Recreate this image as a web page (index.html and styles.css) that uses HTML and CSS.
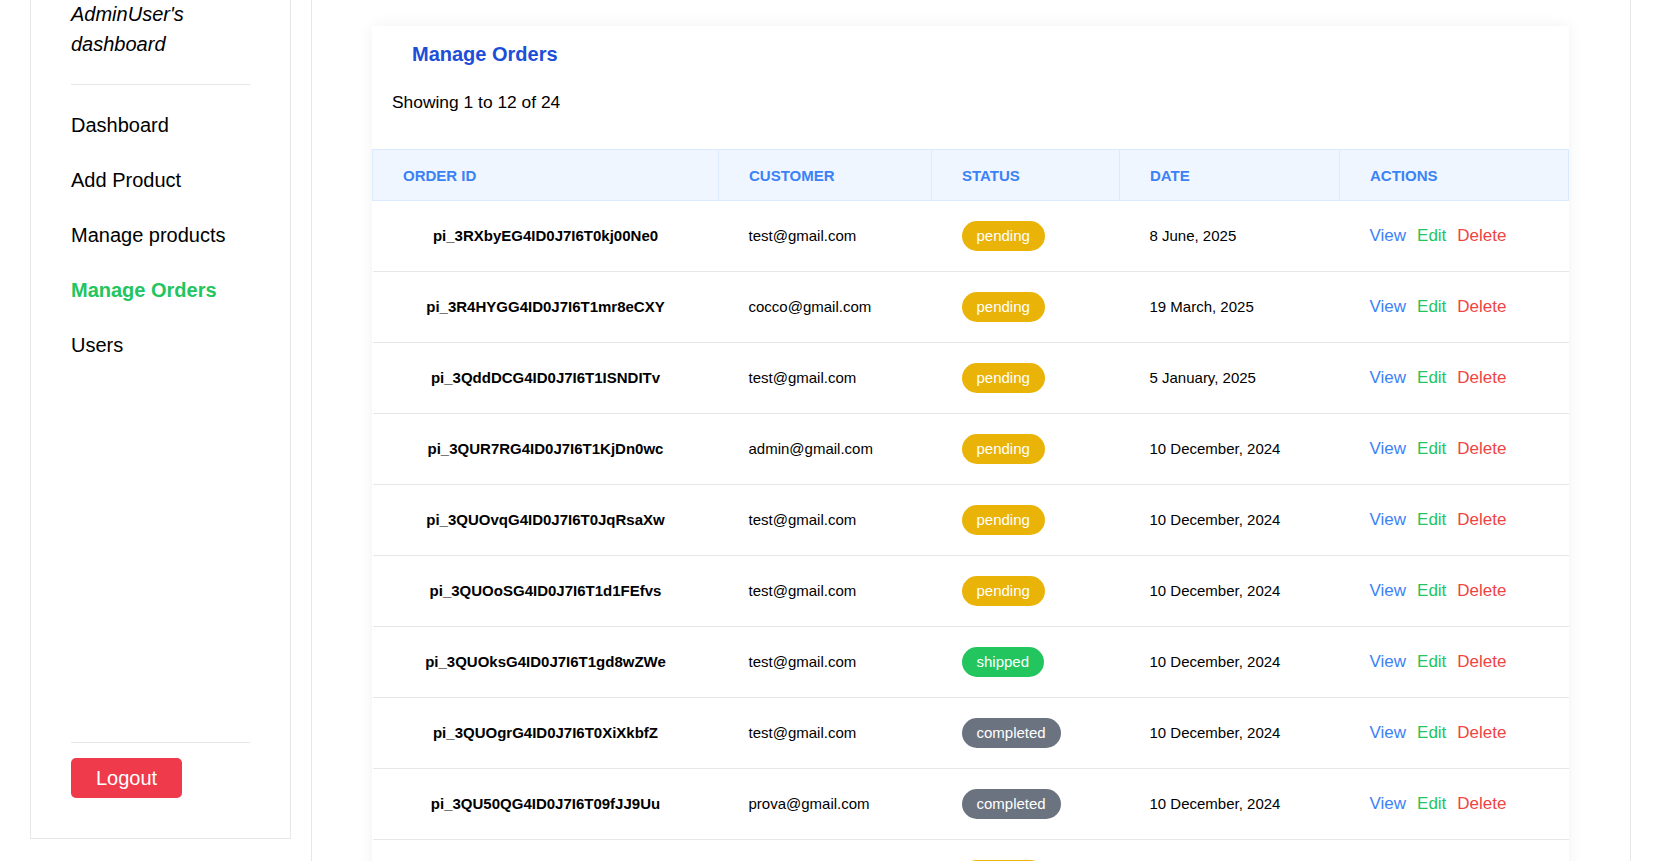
FILE: index.html
```html
<!DOCTYPE html>
<html lang="en">
<head>
<meta charset="utf-8">
<title>Manage Orders</title>
<link rel="stylesheet" href="styles.css">
</head>
<body>
<div class="layout">
  <div class="side-col">
    <aside class="sidebar">
      <h2 class="side-title">AdminUser's dashboard</h2>
      <div class="side-rule"></div>
      <nav class="side-nav">
        <a class="side-link" href="#">Dashboard</a>
        <a class="side-link" href="#">Add Product</a>
        <a class="side-link" href="#">Manage products</a>
        <a class="side-link active" href="#">Manage Orders</a>
        <a class="side-link" href="#">Users</a>
      </nav>
      <div class="side-foot">
        <button class="logout" type="button">Logout</button>
      </div>
    </aside>
  </div>
  <main class="main">
    <section class="card">
      <h1 class="card-title">Manage Orders</h1>
      <p class="card-count">Showing 1 to 12 of 24</p>
      <table class="orders">
        <colgroup>
          <col class="c-id"><col class="c-cust"><col class="c-status"><col class="c-date"><col class="c-act">
        </colgroup>
        <thead>
          <tr><th>Order ID</th><th>Customer</th><th>Status</th><th>Date</th><th>Actions</th></tr>
        </thead>
        <tbody>
          <tr><td class="oid">pi_3RXbyEG4ID0J7I6T0kj00Ne0</td><td>test@gmail.com</td><td><span class="badge pending">pending</span></td><td>8 June, 2025</td><td class="acts"><a class="view" href="#">View</a><a class="edit" href="#">Edit</a><a class="del" href="#">Delete</a></td></tr>
          <tr><td class="oid">pi_3R4HYGG4ID0J7I6T1mr8eCXY</td><td>cocco@gmail.com</td><td><span class="badge pending">pending</span></td><td>19 March, 2025</td><td class="acts"><a class="view" href="#">View</a><a class="edit" href="#">Edit</a><a class="del" href="#">Delete</a></td></tr>
          <tr><td class="oid">pi_3QddDCG4ID0J7I6T1ISNDITv</td><td>test@gmail.com</td><td><span class="badge pending">pending</span></td><td>5 January, 2025</td><td class="acts"><a class="view" href="#">View</a><a class="edit" href="#">Edit</a><a class="del" href="#">Delete</a></td></tr>
          <tr><td class="oid">pi_3QUR7RG4ID0J7I6T1KjDn0wc</td><td>admin@gmail.com</td><td><span class="badge pending">pending</span></td><td>10 December, 2024</td><td class="acts"><a class="view" href="#">View</a><a class="edit" href="#">Edit</a><a class="del" href="#">Delete</a></td></tr>
          <tr><td class="oid">pi_3QUOvqG4ID0J7I6T0JqRsaXw</td><td>test@gmail.com</td><td><span class="badge pending">pending</span></td><td>10 December, 2024</td><td class="acts"><a class="view" href="#">View</a><a class="edit" href="#">Edit</a><a class="del" href="#">Delete</a></td></tr>
          <tr><td class="oid">pi_3QUOoSG4ID0J7I6T1d1FEfvs</td><td>test@gmail.com</td><td><span class="badge pending">pending</span></td><td>10 December, 2024</td><td class="acts"><a class="view" href="#">View</a><a class="edit" href="#">Edit</a><a class="del" href="#">Delete</a></td></tr>
          <tr><td class="oid">pi_3QUOksG4ID0J7I6T1gd8wZWe</td><td>test@gmail.com</td><td><span class="badge shipped">shipped</span></td><td>10 December, 2024</td><td class="acts"><a class="view" href="#">View</a><a class="edit" href="#">Edit</a><a class="del" href="#">Delete</a></td></tr>
          <tr><td class="oid">pi_3QUOgrG4ID0J7I6T0XiXkbfZ</td><td>test@gmail.com</td><td><span class="badge completed">completed</span></td><td>10 December, 2024</td><td class="acts"><a class="view" href="#">View</a><a class="edit" href="#">Edit</a><a class="del" href="#">Delete</a></td></tr>
          <tr><td class="oid">pi_3QU50QG4ID0J7I6T09fJJ9Uu</td><td>prova@gmail.com</td><td><span class="badge completed">completed</span></td><td>10 December, 2024</td><td class="acts"><a class="view" href="#">View</a><a class="edit" href="#">Edit</a><a class="del" href="#">Delete</a></td></tr>
          <tr><td class="oid">pi_3QU4zPG4ID0J7I6T1aB2cD3e</td><td>test@gmail.com</td><td><span class="badge pending">pending</span></td><td>10 December, 2024</td><td class="acts"><a class="view" href="#">View</a><a class="edit" href="#">Edit</a><a class="del" href="#">Delete</a></td></tr>
          <tr><td class="oid">pi_3QU4xKG4ID0J7I6T0mN5pQ7r</td><td>test@gmail.com</td><td><span class="badge pending">pending</span></td><td>9 December, 2024</td><td class="acts"><a class="view" href="#">View</a><a class="edit" href="#">Edit</a><a class="del" href="#">Delete</a></td></tr>
          <tr><td class="oid">pi_3QU4uHG4ID0J7I6T1sT8vW9y</td><td>test@gmail.com</td><td><span class="badge completed">completed</span></td><td>9 December, 2024</td><td class="acts"><a class="view" href="#">View</a><a class="edit" href="#">Edit</a><a class="del" href="#">Delete</a></td></tr>
        </tbody>
      </table>
    </section>
  </main>
</div>
</body>
</html>
```
FILE: styles.css
```css
body {
  margin: 0;
  font-family: "Liberation Sans", Arial, sans-serif;
  color: #000;
  background: #fff;
}

.layout {
  display: flex;
  align-items: stretch;
  margin-top: -42px;
}

/* sidebar */
.side-col {
  flex: 0 0 312px;
  box-sizing: border-box;
  padding: 0 20px 0 30px;
  border-right: 1px solid #e5e7eb;
}

.sidebar {
  height: 881px;
  box-sizing: border-box;
  border: 1px solid #e5e7eb;
  padding: 40px;
  display: flex;
  flex-direction: column;
}

.side-title {
  margin: 0;
  font-size: 20px;
  line-height: 30px;
  font-style: italic;
  font-weight: normal;
}

.side-rule {
  height: 1px;
  background: #e5e7eb;
  margin-top: 25px;
}

.side-nav {
  display: flex;
  flex-direction: column;
  gap: 25px;
  margin-top: 25px;
}

.side-link {
  font-size: 20px;
  line-height: 30px;
  color: #000;
  text-decoration: none;
}

.side-link.active {
  color: #22c55e;
  font-weight: bold;
}

.side-foot {
  margin-top: auto;
  border-top: 1px solid #e5e7eb;
  padding-top: 15px;
}

.logout {
  display: inline-block;
  background: #ee3a4b;
  color: #fff;
  font-family: "Liberation Sans", Arial, sans-serif;
  font-size: 20px;
  line-height: 24px;
  padding: 8px 25px;
  border: 0;
  border-radius: 5px;
}

/* main */
.main {
  flex: 0 0 1318px;
  box-sizing: border-box;
  padding: 68px 61px 40px 60px;
  border-right: 1px solid #e5e7eb;
}

.card {
  background: #fff;
  box-shadow: 0 0 15px rgba(0, 0, 0, 0.06);
  padding: 14px 0 20px;
}

.card-title {
  margin: 0;
  padding: 0 40px;
  font-size: 20px;
  line-height: 28px;
  font-weight: bold;
  color: #1d4ed8;
}

.card-count {
  margin: 21px 20px 0;
  font-size: 17.4px;
  line-height: 26px;
}

.orders {
  margin-top: 34px;
  width: 100%;
  table-layout: fixed;
  border-collapse: collapse;
}

.c-id { width: 346px; }
.c-cust { width: 213px; }
.c-status { width: 188px; }
.c-date { width: 220px; }
.c-act { width: 229px; }

.orders th {
  background: #eff6ff;
  border: 1px solid #dbeafe;
  padding: 17px 30px 16px;
  font-size: 15px;
  line-height: 17px;
  font-weight: bold;
  text-transform: uppercase;
  text-align: left;
  color: #3b82f6;
}

.orders td {
  padding: 20px 30px;
  font-size: 15px;
  line-height: 30px;
  border-bottom: 1px solid #e5e7eb;
  white-space: nowrap;
}

.orders td.oid {
  text-align: center;
  font-weight: bold;
  padding-left: 0;
  padding-right: 0;
}

.badge {
  display: inline-block;
  vertical-align: top;
  padding: 0 15px;
  line-height: 30px;
  border-radius: 999px;
  color: #fff;
  font-size: 15px;
}

.badge.pending { background: #eab308; }
.badge.shipped { background: #22c55e; }
.badge.completed { background: #6b7280; }

.acts {
  font-size: 17px;
}

.acts a {
  font-size: 17px;
  text-decoration: none;
  margin-right: 11px;
}

.acts .view { color: #3b82f6; }
.acts .edit { color: #22c55e; }
.acts .del { color: #ef4444; margin-right: 0; }
```
